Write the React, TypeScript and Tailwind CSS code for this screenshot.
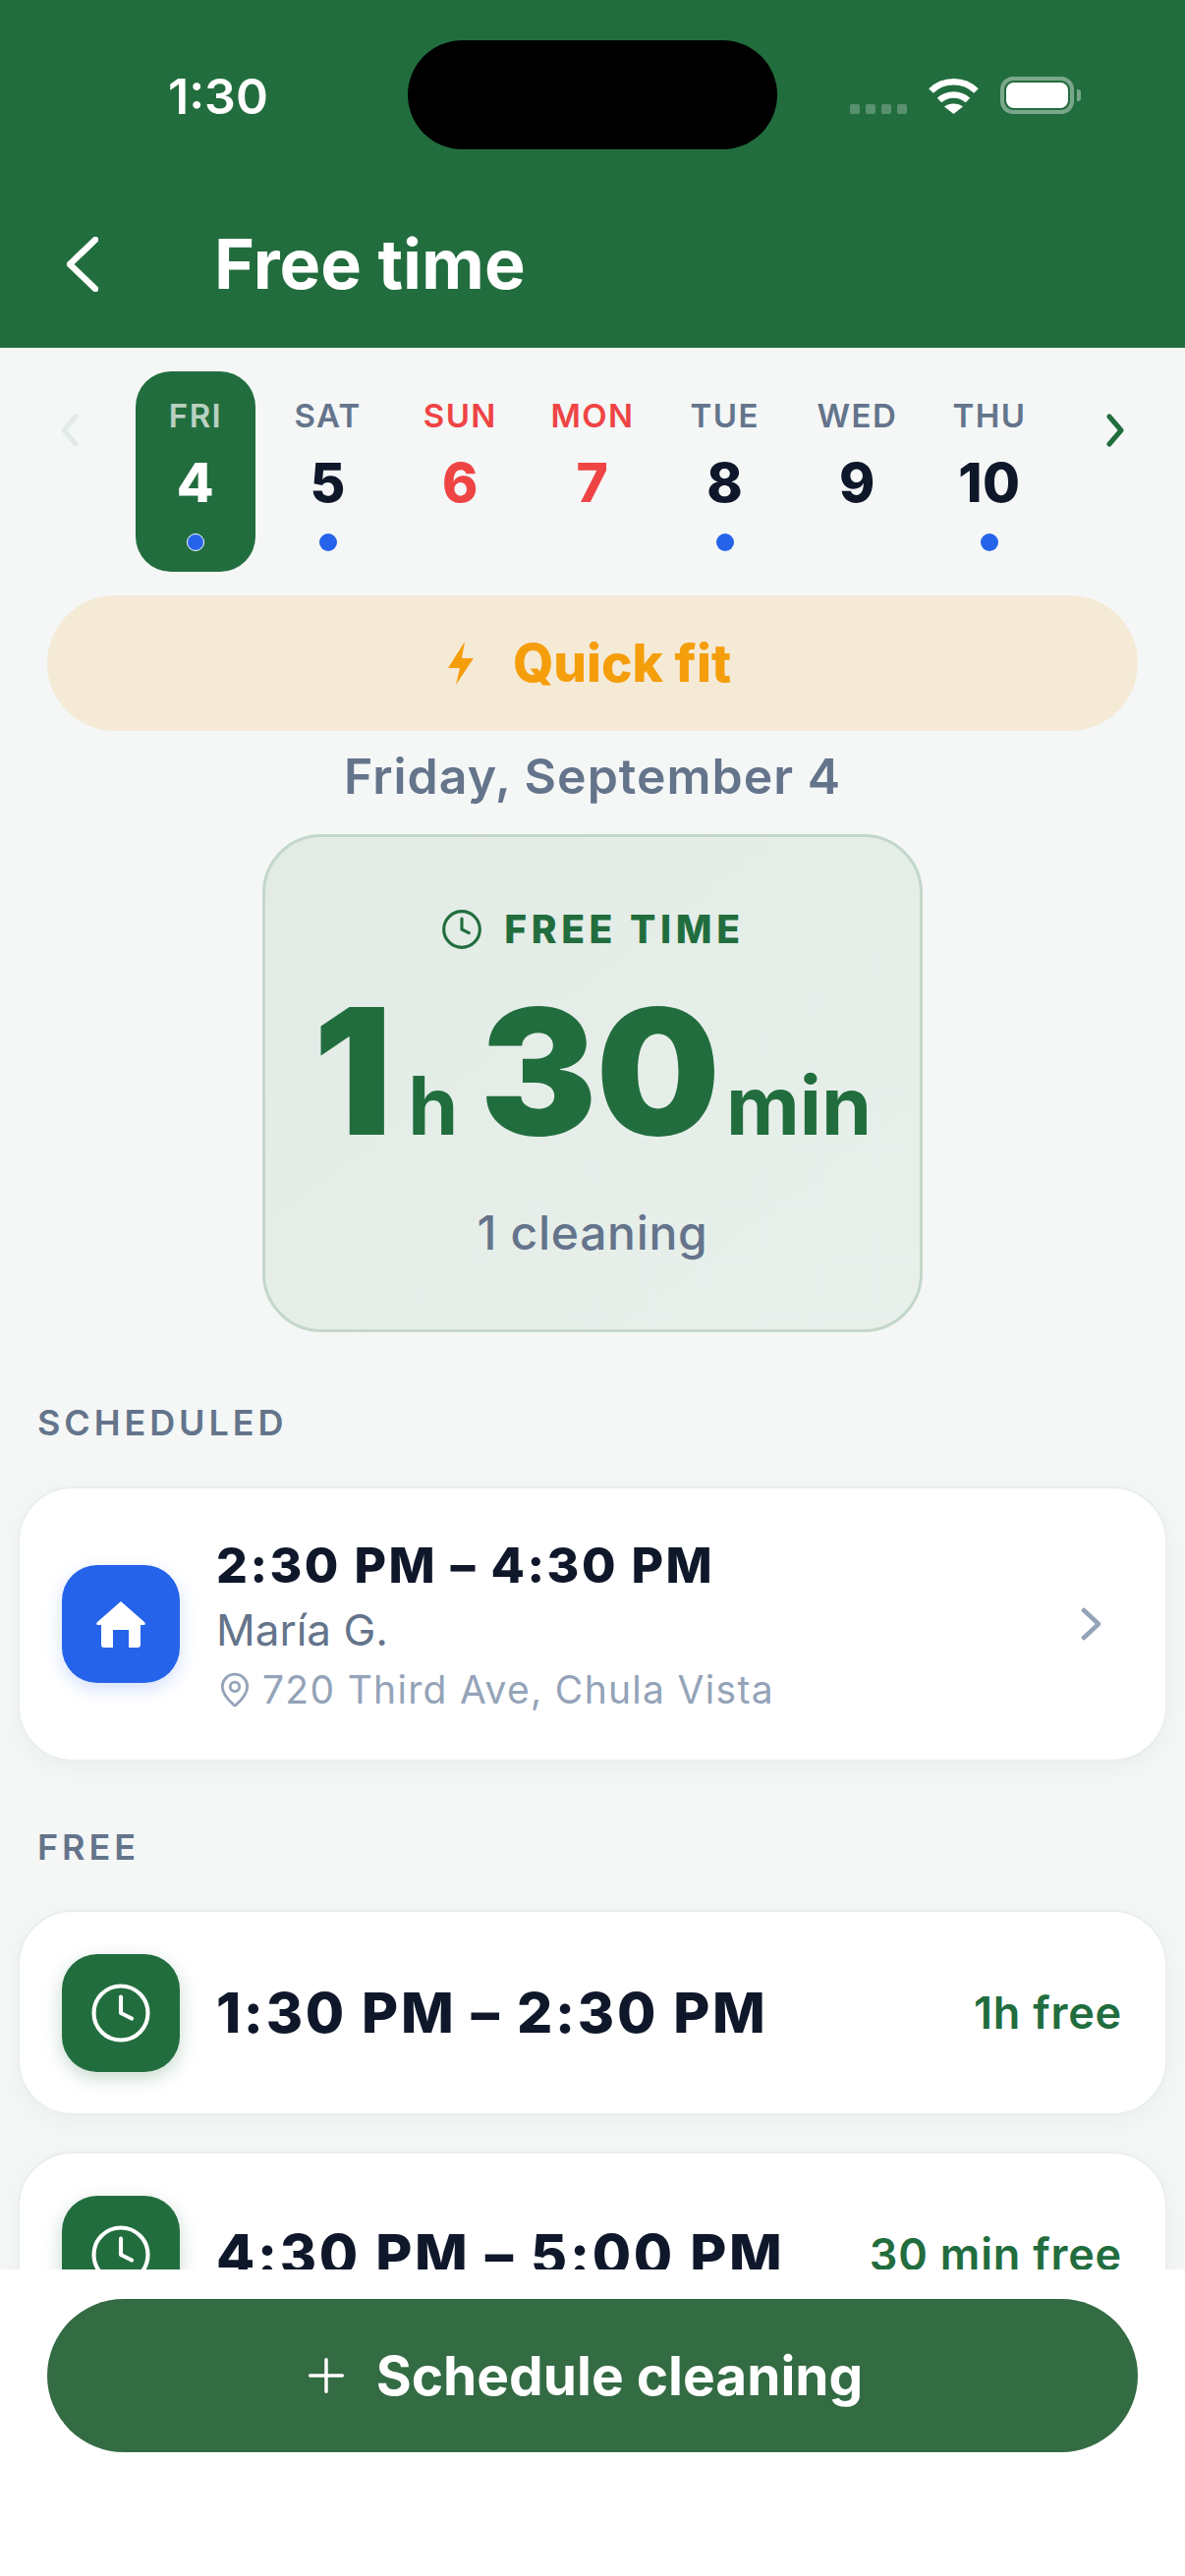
import React from 'react';
import { Clock, MapPin, Plus } from 'lucide-react';

const days = [
  { label: 'FRI', num: '4', dot: true, selected: true },
  { label: 'SAT', num: '5', dot: true },
  { label: 'SUN', num: '6', red: true },
  { label: 'MON', num: '7', red: true },
  { label: 'TUE', num: '8', dot: true },
  { label: 'WED', num: '9' },
  { label: 'THU', num: '10', dot: true },
];

const Chevron = ({ dir, className }: { dir: 'left' | 'right'; className: string }) => (
  <svg viewBox="0 0 20 34" className={className} fill="none" stroke="currentColor" strokeWidth="5" strokeLinecap="round" strokeLinejoin="round">
    <polyline points={dir === 'left' ? '16,3 4,17 16,31' : '4,3 16,17 4,31'} />
  </svg>
);

const StatusBar = () => (
  <div className="flex h-[152px] items-start">
    <div className="ml-[171px] mt-[70px] w-[244px] text-[50px] font-semibold leading-[56px]">1:30</div>
    <div className="mt-[41px] h-[111px] w-[376px] rounded-full bg-black" />
    <div className="ml-[74px] mt-[106px] flex gap-[6px]">
      {[0, 1, 2, 3].map((i) => (
        <div key={i} className="h-[10px] w-[10px] rounded-[2px] bg-white/25" />
      ))}
    </div>
    <svg viewBox="0 0 51 37" className="ml-[22px] mt-[79px] h-[37px] w-[51px]" fill="none" stroke="white" strokeWidth="6.5">
      <path d="M2.5 13.5 C15 1 36 1 48.5 13.5" />
      <path d="M11 23 C19 15.5 32 15.5 40 23" />
      <path d="M25.5 37 L16 29.5 C21 25.5 30 25.5 35 29.5 Z" fill="white" stroke="none" />
    </svg>
    <div className="ml-[22px] mt-[78px] flex items-center">
      <div className="box-border h-[38px] w-[75px] rounded-[13px] border-[4px] border-white/40 p-[2px]">
        <div className="h-full w-full rounded-[8px] bg-white" />
      </div>
      <div className="ml-[3px] h-[12px] w-[4px] rounded-r-[3px] bg-white/40" />
    </div>
  </div>
);

const SectionLabel = ({ children, className }: { children: React.ReactNode; className: string }) => (
  <div className={`px-[38px] text-[36px] font-semibold leading-[44px] tracking-[3.9px] text-[#64748b] ${className}`}>{children}</div>
);

const FreeRow = ({ time, free, className }: { time: string; free: string; className: string }) => (
  <div className={`mx-[18px] box-border flex h-[209px] shrink-0 items-center rounded-[56px] border-[2px] border-[#e9efec] bg-white pl-[43px] pr-[44px] shadow-[0_6px_24px_rgba(15,23,42,0.04)] ${className}`}>
    <div className="flex h-[120px] w-[120px] shrink-0 items-center justify-center rounded-[36px] bg-[#226d3e] shadow-[0_6px_18px_rgba(34,109,62,0.25)]">
      <Clock size={66} strokeWidth={1.5} color="white" />
    </div>
    <div className="ml-[37px] flex-1 text-[57px] font-extrabold leading-[64px] tracking-[2.7px] text-[#0f172a]">{time}</div>
    <div className="text-[45px] font-semibold leading-[50px] tracking-[0.8px] text-[#226d3e]">{free}</div>
  </div>
);

export default function App() {
  return (
    <div className="flex h-[2622px] w-[1206px] flex-col overflow-hidden bg-white font-['Inter',sans-serif]">
      <header className="h-[354px] shrink-0 bg-[#226d3e] text-white">
        <StatusBar />
        <div className="flex items-center pt-[76px]">
          <svg viewBox="0 0 32 56" className="ml-[68px] h-[56px] w-[32px]" fill="none" stroke="white" strokeWidth="6.5" strokeLinecap="round" strokeLinejoin="round">
            <polyline points="29,3 3,28 29,53" />
          </svg>
          <h1 className="ml-[118px] text-[70px] font-bold leading-[82px]">Free time</h1>
        </div>
      </header>

      <main className="min-h-0 flex-1 overflow-hidden bg-[#f4f7f6]">
        <div className="mt-[24px] flex items-start pl-[61px]">
          <Chevron dir="left" className="mt-[43px] h-[34px] w-[20px] text-[#e3ebe7]" />
          <div className="ml-[57px] grid w-[930px] grid-cols-7 gap-x-[12.67px]">
            {days.map((d) => (
              <div
                key={d.label}
                className={`flex h-[204px] flex-col items-center rounded-[36px] pt-[25px] ${d.selected ? 'bg-[#226d3e]' : ''}`}
              >
                <div className={`text-[33px] font-semibold leading-[40px] tracking-[1.4px] ${d.selected ? 'text-white/70' : d.red ? 'text-[#ef4444]' : 'text-[#64748b]'}`}>
                  {d.label}
                </div>
                <div className={`mt-[18px] text-[55px] font-extrabold leading-[60px] tracking-[0.5px] ${d.selected ? 'text-white' : d.red ? 'text-[#ef4444]' : 'text-[#0f172a]'}`}>
                  {d.num}
                </div>
                {d.dot && (
                  <div className={`mt-[22px] box-border h-[18px] w-[18px] rounded-full bg-[#2563eb] ${d.selected ? 'border-[1.5px] border-white' : ''}`} />
                )}
              </div>
            ))}
          </div>
          <Chevron dir="right" className="ml-[57px] mt-[43px] h-[34px] w-[20px] text-[#226d3e]" />
        </div>

        <div className="mx-[48px] mt-[24px] flex h-[138px] items-center justify-center rounded-full bg-[#f5ead6] pr-[6px]">
          <svg viewBox="0 0 26 44" className="h-[44px] w-[26px]" fill="#f59e0b">
            <polygon points="17,0 0,27 12,27 8,44 26,17 14,17" />
          </svg>
          <span className="ml-[40px] text-[53px] font-extrabold leading-[60px] text-[#f59e0b]">Quick fit</span>
        </div>

        <div className="mt-[19px] text-center text-[50px] font-semibold leading-[54px] tracking-[1px] text-[#64748b]">
          Friday, September 4
        </div>

        <div className="mx-auto mt-[32px] box-border flex h-[507px] w-[672px] flex-col items-center rounded-[60px] border-[3px] border-[#c3d7ca] bg-gradient-to-br from-[#e2ebe5] to-[#e9f0ec] pt-[72px]">
          <div className="flex items-center">
            <Clock size={44} strokeWidth={1.7} color="#226d3e" />
            <span className="ml-[21px] text-[39px] font-extrabold leading-[40px] tracking-[4.6px] text-[#226d3e]">FREE TIME</span>
          </div>
          <div className="mt-[35px] flex items-baseline text-[#226d3e]">
            <span className="text-[178px] font-black leading-[176px] tracking-[-1px]">1</span>
            <span className="ml-[17px] text-[82px] font-bold leading-[176px]">h</span>
            <span className="ml-[22px] text-[178px] font-black leading-[176px] tracking-[-1px]">30</span>
            <span className="ml-[7px] text-[82px] font-bold leading-[176px]">min</span>
          </div>
          <div className="mt-[14px] text-[48px] font-medium leading-[54px] tracking-[0.7px] text-[#64748b]">1 cleaning</div>
        </div>

        <SectionLabel className="mt-[70px]">SCHEDULED</SectionLabel>

        <div className="mx-[18px] mt-[43px] box-border flex h-[280px] items-center rounded-[56px] border-[2px] border-[#e9efec] bg-white pl-[43px] pr-[65px] shadow-[0_6px_24px_rgba(15,23,42,0.04)]">
          <div className="flex h-[120px] w-[120px] shrink-0 items-center justify-center rounded-[36px] bg-[#2563eb] shadow-[0_6px_18px_rgba(37,99,235,0.2)]">
            <svg viewBox="0 0 50 47" className="h-[47px] w-[50px]" fill="white">
              <path fillRule="evenodd" d="M25 0 L49 21 Q51 24 48 24 L45 24 L45 44 Q45 47 42 47 L33 47 L33 29 L17 29 L17 47 L8 47 Q5 47 5 44 L5 24 L2 24 Q-1 24 1 21 Z" />
            </svg>
          </div>
          <div className="ml-[37px] flex-1">
            <div className="text-[50px] font-extrabold leading-[60px] tracking-[2.5px] text-[#0f172a]">2:30 PM – 4:30 PM</div>
            <div className="mt-[10px] text-[44px] leading-[52px] text-[#64748b]">María G.</div>
            <div className="mt-[11px] flex items-center text-[39px] leading-[48px] tracking-[1.3px] text-[#94a3b8]">
              <MapPin size={38} strokeWidth={1.8} />
              <span className="ml-[9px]">720 Third Ave, Chula Vista</span>
            </div>
          </div>
          <svg viewBox="0 0 21 34" className="h-[34px] w-[21px]" fill="none" stroke="#94a3b8" strokeWidth="4.5" strokeLinecap="round" strokeLinejoin="round">
            <polyline points="3,3 18,17 3,31" />
          </svg>
        </div>

        <SectionLabel className="mt-[65px]">FREE</SectionLabel>

        <FreeRow className="mt-[42px]" time="1:30 PM – 2:30 PM" free="1h free" />
        <FreeRow className="mt-[37px]" time="4:30 PM – 5:00 PM" free="30 min free" />
      </main>

      <footer className="h-[312px] shrink-0 bg-white px-[48px] pt-[30px]">
        <button className="flex h-[156px] w-full items-center justify-center rounded-full bg-[#336b43] pr-[24px] text-white">
          <Plus size={56} strokeWidth={1.5} />
          <span className="ml-[23px] text-[55px] font-bold leading-[60px]">Schedule cleaning</span>
        </button>
      </footer>
    </div>
  );
}
